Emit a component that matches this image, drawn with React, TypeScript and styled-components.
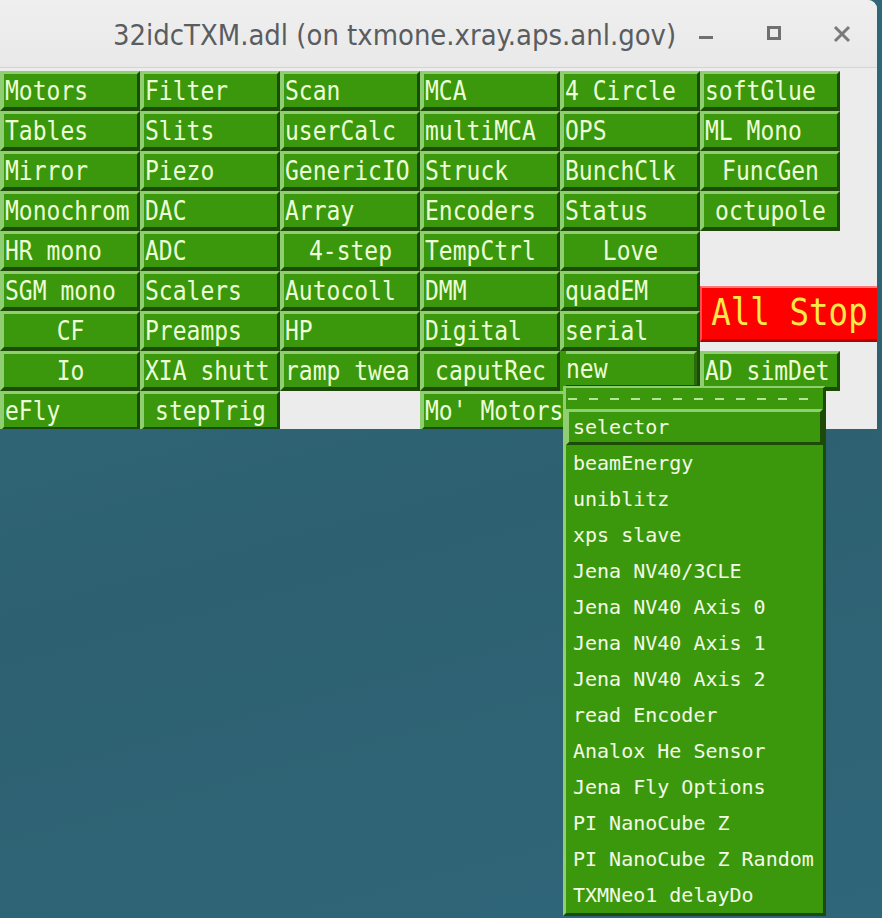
import React from 'react';
import styled, { createGlobalStyle } from 'styled-components';

const LIGHT = '#8fcf72';
const FILL = '#3b980c';
const DARK = '#1b4b06';
const TEXT = '#ecffd8';

const GlobalStyle = createGlobalStyle`
  html, body { margin: 0; padding: 0; background: #2e6372; }
  body { width: 882px; height: 918px; overflow: hidden; }
`;

const Desktop = styled.div`
  position: relative;
  width: 882px;
  height: 918px;
  background: linear-gradient(165deg, #326b7d 0%, #2d6171 55%, #30667a 100%);
  overflow: hidden;
`;

const Window = styled.div`
  width: 877px;
  background: #ececec;
  border-top-right-radius: 9px;
  overflow: hidden;
`;

const TitleBar = styled.div`
  height: 68px;
  display: flex;
  align-items: center;
  padding: 0 20px 0 113px;
  box-sizing: border-box;
  background: linear-gradient(#efefef, #e9e9e9);
  border-bottom: 1px solid #d4d4d4;
`;

const Title = styled.div`
  font-family: 'DejaVu Sans Condensed', 'DejaVu Sans', sans-serif;
  font-stretch: condensed;
  font-size: 28.9px;
  color: #595d60;
  white-space: nowrap;
  padding-top: 2px;
`;

const Controls = styled.div`
  margin-left: auto;
  display: flex;
  gap: 38px;
`;

const Ctl = styled.div`
  width: 30px;
  height: 30px;
  display: flex;
  align-items: center;
  justify-content: center;
`;

const Body = styled.div`
  height: 361px;
  overflow: hidden;
  padding-top: 3px;
  box-sizing: border-box;
`;

const Grid = styled.div`
  display: grid;
  grid-template-columns: repeat(6, 140px) 37px;
  grid-auto-rows: 40px;
`;

const Btn = styled.div<{ $row: number; $col: number; $span?: number; $center?: boolean }>`
  grid-row: ${p => p.$row};
  grid-column: ${p => p.$col} / span ${p => p.$span || 1};
  box-sizing: border-box;
  background: ${FILL};
  border-style: solid;
  border-width: 3px 3px 4px 4px;
  border-color: ${LIGHT} ${DARK} ${DARK} ${LIGHT};
  display: flex;
  align-items: center;
  justify-content: ${p => (p.$center ? 'center' : 'flex-start')};
  padding-left: ${p => (p.$center ? '0' : '1px')};
  padding-top: 1px;
  overflow: hidden;
`;

const Label = styled.span`
  display: inline-block;
  font-family: 'DejaVu Sans Mono', 'Liberation Mono', monospace;
  font-size: 23px;
  line-height: 1;
  color: ${TEXT};
  white-space: pre;
  transform: scaleY(1.12);
`;

const NewCell = styled.div`
  grid-row: 8;
  grid-column: 5;
  box-sizing: border-box;
  background: ${DARK};
  border-left: 6px solid ${FILL};
  padding: 0 3px 3px 0;
  display: flex;
`;

const NewButton = styled.div`
  flex: 1;
  box-sizing: border-box;
  background: ${FILL};
  border-top: 3px solid ${LIGHT};
  border-right: 3px solid #2a6a0c;
  display: flex;
  align-items: center;
  margin-bottom: 3px;
`;

const AllStop = styled.div`
  grid-row: 6 / span 2;
  grid-column: 6 / span 2;
  align-self: start;
  margin-top: 15px;
  height: 56px;
  box-sizing: border-box;
  background: #ff0000;
  border-top: 2px solid #ff7a7a;
  border-left: 2px solid #ff5050;
  border-bottom: 3px solid #b00000;
  display: flex;
  align-items: center;
  justify-content: center;
`;

const StopText = styled.span`
  display: inline-block;
  font-family: 'DejaVu Sans Mono', 'Liberation Mono', monospace;
  font-size: 32.5px;
  line-height: 1;
  color: #fde84a;
  transform: scaleY(1.12);
`;

const Menu = styled.div`
  position: absolute;
  left: 563px;
  top: 386px;
  width: 263px;
  height: 530px;
  box-sizing: border-box;
  background: ${FILL};
  border-style: solid;
  border-width: 2px 3px 3px 3px;
  border-color: ${LIGHT} ${DARK} ${DARK} ${LIGHT};
  display: flex;
  flex-direction: column;
`;

const TearOff = styled.div`
  height: 21px;
  display: flex;
  align-items: center;
  padding: 0 3px 0 2px;
  &::before {
    content: '';
    flex: 1;
    height: 2px;
    background-image: repeating-linear-gradient(to right, #b4e696 0 9px, transparent 9px 21px);
  }
`;

const Item = styled.div<{ $active?: boolean }>`
  height: 36px;
  flex: none;
  box-sizing: border-box;
  display: flex;
  align-items: center;
  padding-left: ${p => (p.$active ? '4px' : '7px')};
  border-style: solid;
  border-width: ${p => (p.$active ? '3px' : '0')};
  border-color: ${LIGHT} ${DARK} ${DARK} ${LIGHT};
  font-family: 'DejaVu Sans Mono', 'Liberation Mono', monospace;
  font-size: 20px;
  color: #f2fbe8;
  white-space: pre;
`;

type Cell = { t: string; c?: boolean; span?: number } | null;
const L = (t: string): Cell => ({ t });
const C = (t: string): Cell => ({ t, c: true });

const rows: Cell[][] = [
  [L('Motors'), L('Filter'), L('Scan'), L('MCA'), L('4 Circle'), L('softGlue')],
  [L('Tables'), L('Slits'), L('userCalc'), L('multiMCA'), L('OPS'), L('ML Mono')],
  [L('Mirror'), L('Piezo'), L('GenericIO'), L('Struck'), L('BunchClk'), C('FuncGen')],
  [L('Monochrom'), L('DAC'), L('Array'), L('Encoders'), L('Status'), C('octupole')],
  [L('HR mono'), L('ADC'), C('4-step'), L('TempCtrl'), C('Love'), null],
  [L('SGM mono'), L('Scalers'), L('Autocoll'), L('DMM'), L('quadEM'), null],
  [C('CF'), L('Preamps'), L('HP'), L('Digital'), L('serial'), null],
  [C('Io'), L('XIA shutt'), L('ramp twea'), C('caputRec'), null, L('AD simDet')],
  [L('eFly'), C('stepTrig'), null, { t: "Mo' Motors", span: 2 }, null, null],
];

const menuItems = [
  'beamEnergy',
  'uniblitz',
  'xps slave',
  'Jena NV40/3CLE',
  'Jena NV40 Axis 0',
  'Jena NV40 Axis 1',
  'Jena NV40 Axis 2',
  'read Encoder',
  'Analox He Sensor',
  'Jena Fly Options',
  'PI NanoCube Z',
  'PI NanoCube Z Random',
  'TXMNeo1 delayDo',
];

export default function App() {
  return (
    <Desktop>
      <GlobalStyle />
      <Window>
        <TitleBar>
          <Title>32idcTXM.adl (on txmone.xray.aps.anl.gov)</Title>
          <Controls>
            <Ctl>
              <svg width="16" height="16" viewBox="0 0 16 16">
                <rect x="1" y="10" width="14" height="3" fill="#707070" />
              </svg>
            </Ctl>
            <Ctl>
              <svg width="16" height="16" viewBox="0 0 16 16">
                <rect x="2.5" y="1.5" width="11" height="11" fill="none" stroke="#707070" strokeWidth="3" />
              </svg>
            </Ctl>
            <Ctl>
              <svg width="18" height="18" viewBox="0 0 18 18">
                <path d="M2 2 L16 16 M16 2 L2 16" stroke="#7a7a7a" strokeWidth="3" />
              </svg>
            </Ctl>
          </Controls>
        </TitleBar>
        <Body>
          <Grid>
            {rows.map((row, r) =>
              row.map((cell, c) =>
                cell ? (
                  <Btn key={`${r}-${c}`} $row={r + 1} $col={c + 1} $span={cell.span} $center={cell.c}>
                    <Label>{cell.t}</Label>
                  </Btn>
                ) : null
              )
            )}
            <NewCell>
              <NewButton>
                <Label>new</Label>
              </NewButton>
            </NewCell>
            <AllStop>
              <StopText>All Stop</StopText>
            </AllStop>
          </Grid>
        </Body>
      </Window>
      <Menu>
        <TearOff />
        <Item $active>selector</Item>
        {menuItems.map(m => (
          <Item key={m}>{m}</Item>
        ))}
      </Menu>
    </Desktop>
  );
}
